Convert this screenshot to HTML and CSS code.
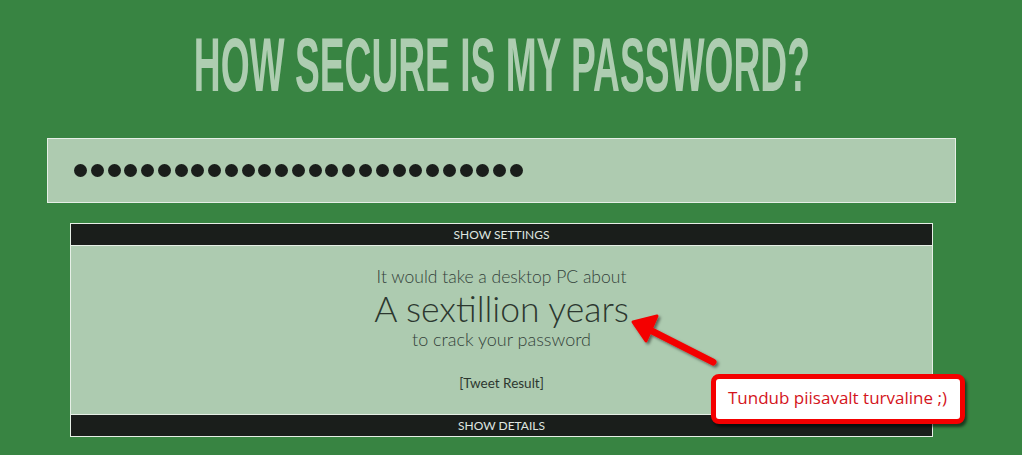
FILE: index.html
```html
<!DOCTYPE html>
<html>
<head>
<meta charset="utf-8">
<link rel="stylesheet" href="styles.css">
</head>
<body>
<div class="page">
  <h1 class="title"><span class="title-text">HOW SECURE IS MY PASSWORD?</span></h1>
  <div class="pw-box">
    <div class="dots">
      <span></span><span></span><span></span><span></span><span></span><span></span><span></span><span></span><span></span>
      <span></span><span></span><span></span><span></span><span></span><span></span><span></span><span></span><span></span>
      <span></span><span></span><span></span><span></span><span></span><span></span><span></span><span></span><span></span>
    </div>
  </div>
  <div class="result">
    <div class="bar bar-top">SHOW SETTINGS</div>
    <div class="result-body">
      <p class="line-small">It would take a desktop PC about</p>
      <p class="line-big">A sextillion years</p>
      <p class="line-mid">to crack your password</p>
      <p class="tweet">[Tweet Result]</p>
    </div>
    <div class="bar bar-bottom">SHOW DETAILS</div>
  </div>
</div>
<svg class="arrow" width="110" height="70" viewBox="0 0 110 70">
  <defs>
    <filter id="sh" x="-20%" y="-20%" width="140%" height="140%">
      <feDropShadow dx="2" dy="2" stdDeviation="1.5" flood-color="#000" flood-opacity="0.5"/>
    </filter>
  </defs>
  <g filter="url(#sh)">
    <line x1="93" y1="50" x2="28" y2="17" stroke="#f40000" stroke-width="7" stroke-linecap="round"/>
    <polygon points="13,10 37,4 26,29" fill="#f40000" stroke="#f40000" stroke-width="3" stroke-linejoin="round"/>
  </g>
</svg>
<div class="callout">Tundub piisavalt turvaline ;)</div>
</body>
</html>
```
FILE: styles.css
```css
html, body {
  margin: 0;
  padding: 0;
}
body {
  background: #388442;
  width: 1022px;
  height: 455px;
  overflow: hidden;
  position: relative;
  font-family: "Lato", "Liberation Sans", sans-serif;
}
.page {
  width: 1003px;
  display: flex;
  flex-direction: column;
  align-items: center;
}
.title {
  margin: 0;
  width: 100%;
  height: 138px;
  overflow: hidden;
  display: flex;
  justify-content: center;
  font-family: "Liberation Sans", sans-serif;
  font-weight: bold;
  font-size: 76px;
  line-height: 1;
  color: #aecdb1;
}
.title-text {
  display: inline-block;
  flex: none;
  padding-top: 27px;
  height: 80px;
  transform: scaleX(0.489);
  white-space: nowrap;
}
.pw-box {
  box-sizing: border-box;
  width: 909px;
  height: 65px;
  border: 1px solid #e6efe6;
  background: #aecbb0;
  display: flex;
  align-items: center;
  padding-left: 26px;
}
.dots {
  display: flex;
  gap: 3.77px;
}
.dots span {
  width: 13px;
  height: 13px;
  border-radius: 50%;
  background: #1a1e1b;
}
.result {
  box-sizing: border-box;
  margin-top: 20px;
  width: 863px;
  height: 214px;
  border: 1px solid #e6efe6;
  display: flex;
  flex-direction: column;
}
.bar {
  background: #1a1e1b;
  color: #dfe6e0;
  font-size: 12px;
  height: 21px;
  line-height: 22px;
  text-align: center;
}
.bar-top {
  border-bottom: 1px solid #e6efe6;
}
.bar-bottom {
  border-top: 1px solid #e6efe6;
}
.result-body {
  flex: 1;
  background: #adcbb0;
  color: #33423a;
  text-align: center;
  font-weight: 300;
  padding-top: 20px;
}
.result-body p {
  margin: 0;
}
.line-small {
  font-size: 17.5px;
  line-height: 22px;
}
.line-big {
  font-size: 35.5px;
  line-height: 42px;
  color: #2c372f;
}
.line-mid {
  font-size: 18px;
  line-height: 18px;
}
.tweet {
  margin-top: 25px !important;
  font-size: 13.5px;
  line-height: 20px;
  font-weight: 400;
  color: #2c372f;
}
.arrow {
  position: absolute;
  left: 620px;
  top: 312px;
}
.callout {
  position: absolute;
  left: 711px;
  top: 374px;
  box-sizing: border-box;
  width: 254px;
  height: 50px;
  border: 5px solid #f40000;
  border-radius: 8px;
  background: #ffffff;
  box-shadow: 2px 3px 3px rgba(0,0,0,0.55);
  color: #d4141c;
  font-family: "Open Sans", "Noto Sans", sans-serif;
  font-size: 17px;
  line-height: 38px;
  padding-left: 12px;
}
```
